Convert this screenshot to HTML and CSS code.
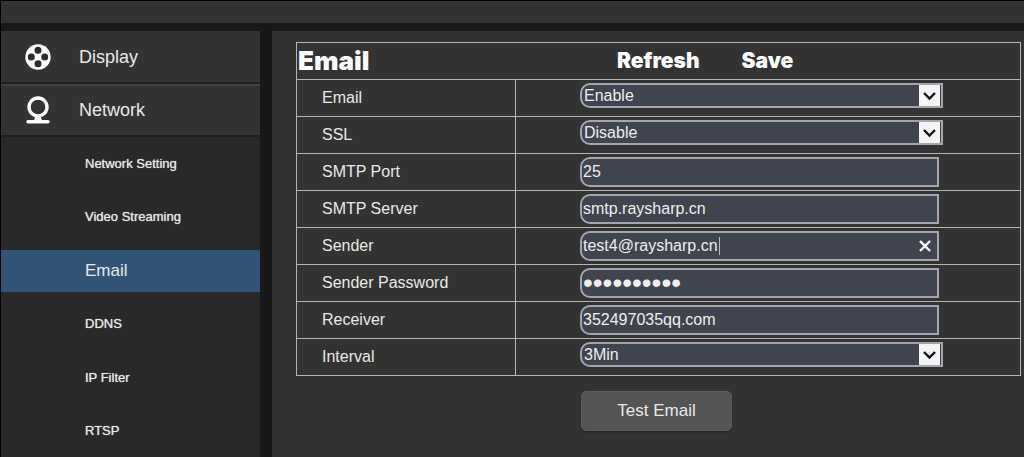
FILE: index.html
```html
<!DOCTYPE html>
<html lang="en">
<head>
<meta charset="utf-8">
<title>Email settings</title>
<link rel="stylesheet" href="styles.css">
</head>
<body>
<div class="app">
  <header class="topbar"></header>
  <div class="body">
    <nav class="sidebar">
      <a class="section" href="#display">
        <svg class="section-icon" viewBox="0 0 26 28">
          <circle cx="13" cy="14" r="12.7" fill="#fff"/>
          <g fill="#2c2c2c"><circle cx="13" cy="7.3" r="3.5"/><circle cx="13" cy="20.7" r="3.5"/><circle cx="6.3" cy="14" r="3.5"/><circle cx="19.7" cy="14" r="3.5"/></g>
        </svg>
        <span>Display</span>
      </a>
      <a class="section" href="#network">
        <svg class="section-icon" viewBox="0 0 26 28">
          <circle cx="13" cy="11" r="9" fill="none" stroke="#fff" stroke-width="3.4"/>
          <path d="M10.5 20h5l1.500 4h6a1.500 1.500 0 0 1 0 3.400H3a1.500 1.500 0 0 1 0-3.400h6z" fill="#fff"/>
        </svg>
        <span>Network</span>
      </a>
      <div class="submenu">
        <a class="sub" href="#setting">Network Setting</a>
        <a class="sub" href="#video">Video Streaming</a>
        <a class="sub active" href="#email">Email</a>
        <a class="sub" href="#ddns">DDNS</a>
        <a class="sub" href="#filter">IP Filter</a>
        <a class="sub" href="#rtsp">RTSP</a>
      </div>
    </nav>
    <main class="main">
      <form>
      <table class="settings">
        <thead>
          <tr><td colspan="2">
            <div class="heading">
              <h1 class="title">Email</h1>
              <div class="actions">
                <button type="button" class="action">Refresh</button>
                <button type="button" class="action">Save</button>
              </div>
            </div>
          </td></tr>
        </thead>
        <tbody>
          <tr>
            <th><label for="enable">Email</label></th>
            <td class="cell-select"><div class="select"><select id="enable"><option>Enable</option><option>Disable</option></select><svg class="arrow" viewBox="0 0 21 21"><path d="M5 8l5.500 5.500L16 8" fill="none" stroke="#111" stroke-width="2.400"/></svg></div></td>
          </tr>
          <tr>
            <th><label for="ssl">SSL</label></th>
            <td class="cell-select"><div class="select"><select id="ssl"><option>Disable</option><option>Enable</option></select><svg class="arrow" viewBox="0 0 21 21"><path d="M5 8l5.500 5.500L16 8" fill="none" stroke="#111" stroke-width="2.400"/></svg></div></td>
          </tr>
          <tr>
            <th><label for="port">SMTP Port</label></th>
            <td><input class="field" id="port" type="text" value="25"></td>
          </tr>
          <tr>
            <th><label for="server">SMTP Server</label></th>
            <td><input class="field" id="server" type="text" value="smtp.raysharp.cn"></td>
          </tr>
          <tr>
            <th><label for="sender">Sender</label></th>
            <td><div class="clearable"><input class="field" id="sender" type="text" value="test4@raysharp.cn"><span class="caret"></span><button type="button" class="clear" aria-label="Clear"><svg viewBox="0 0 12 12"><path d="M1 1l10 10M11 1l-10 10" stroke="#fff" stroke-width="2.400"/></svg></button></div></td>
          </tr>
          <tr>
            <th><label for="password">Sender Password</label></th>
            <td><input class="field password" id="password" type="password" value="abcdefghij"></td>
          </tr>
          <tr>
            <th><label for="receiver">Receiver</label></th>
            <td><input class="field" id="receiver" type="text" value="352497035qq.com"></td>
          </tr>
          <tr>
            <th><label for="interval">Interval</label></th>
            <td class="cell-select"><div class="select"><select id="interval"><option>3Min</option><option>5Min</option><option>10Min</option></select><svg class="arrow" viewBox="0 0 21 21"><path d="M5 8l5.500 5.500L16 8" fill="none" stroke="#111" stroke-width="2.400"/></svg></div></td>
          </tr>
        </tbody>
      </table>
      <button type="button" class="test">Test Email</button>
      </form>
    </main>
  </div>
</div>
</body>
</html>
```
FILE: styles.css
```css
* { box-sizing: border-box; }
body {
  margin: 0;
  background: #181918;
  color: #e8e8e8;
  font: 16px/20px "Liberation Sans", Arial, sans-serif;
}
.app {
  display: flex;
  flex-direction: column;
  height: 100vh;
  overflow: hidden;
  border: solid #000;
  border-width: 1px 0 0 1px;
}
.topbar { flex: none; height: 22px; background: #333; }
.body { display: flex; flex: 1; gap: 12px; padding-top: 8px; min-height: 0; }

.sidebar { flex: none; width: 259px; background: #292929; }
.section {
  display: flex;
  align-items: center;
  gap: 28px;
  height: 53px;
  padding: 0 0 2px 24px;
  background: #333;
  border-top: 2px solid #404040;
  border-bottom: 2px solid #1f1f1f;
  color: #e8e8e8;
  font-size: 18px;
  text-decoration: none;
}
.section:first-child { border-top-color: #333; }
.section-icon { width: 26px; height: 28px; }
.submenu { display: grid; grid-auto-rows: 1fr; align-items: center; height: 321px; }
.sub {
  display: flex;
  align-items: center;
  height: 42px;
  padding-left: 84px;
  color: #e8e8e8;
  font-size: 13px;
  text-decoration: none;
  text-shadow: 0 0 1px #ccc;
}
.sub.active { background: #325577; font-size: 17px; text-shadow: none; }

.main { flex: 1; min-width: 0; padding: 11px 3px 0 24px; background: #333; }
.settings { width: 100%; border-collapse: collapse; }
.settings tr { height: 37px; }
.settings th, .settings td { padding: 0; border: 1px solid #b4b4b4; }
.settings th { width: 219px; padding-left: 25px; font-weight: 400; text-align: left; }
.settings tbody td { padding-left: 64px; }
.settings .cell-select { padding-top: 3px; vertical-align: top; }

.heading { display: flex; align-items: center; }
.title { width: 320px; margin: 0; padding-left: 1px; }
.title, .action { color: #fff; font-family: Inter, "Liberation Sans", sans-serif; font-weight: 900; }
.title { font-size: 26px; line-height: 30px; }
.actions { display: flex; gap: 42px; }
.action { padding: 0; border: 0; background: none; font-size: 21px; line-height: 24px; }

.field, .select select {
  display: block;
  margin: 0;
  border: 2px solid #a4a5ad;
  background: #40444f;
  color: #eee;
  font: inherit;
  outline: 0;
}
.field { width: 359px; height: 30px; padding: 0 0 1px 1px; border-radius: 10px 0 0 10px; }
.password { font-size: 28px; }
.select { display: grid; width: 363px; }
.select select {
  grid-area: 1 / 1;
  width: 100%;
  height: 25px;
  padding: 0 0 0 2px;
  border-radius: 10px 0 0 10px;
  appearance: none;
}
.arrow {
  grid-area: 1 / 1;
  place-self: center end;
  width: 21px;
  height: 21px;
  margin-right: 3px;
  background: #f4f4f4;
  pointer-events: none;
}
.clearable { display: grid; width: 359px; }
.clearable > * { grid-area: 1 / 1; align-self: center; }
.caret { width: 1px; height: 18px; margin-left: 139px; background: #bbb; }
.clear { justify-self: end; width: 12px; height: 12px; margin-right: 8px; padding: 0; border: 0; background: none; }
.clear svg { display: block; }
.test {
  display: block;
  width: 151px;
  height: 40px;
  margin: 15px 0 0 285px;
  border: 1px solid #5c5c5c;
  border-radius: 5px;
  background: #545454;
  box-shadow: 0 1px 2px #222;
  color: #e8e8e8;
  font: 17px/20px "Liberation Sans", Arial, sans-serif;
}
```
